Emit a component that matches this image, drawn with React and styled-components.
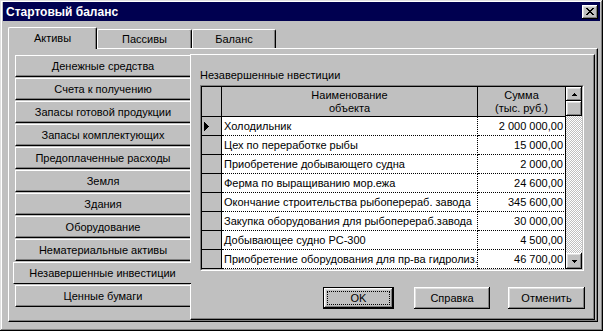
import React from 'react';
import styled, { createGlobalStyle } from 'styled-components';

const GlobalStyle = createGlobalStyle`
  html, body { margin: 0; padding: 0; background: #c0c0c0; }
  body { font-family: "Liberation Sans", Arial, sans-serif; font-size: 11px; color: #000; }
  * { box-sizing: border-box; }
`;

const bevelOut = `
  box-shadow: inset -1px -1px #000, inset 1px 1px #fff, inset -2px -2px #808080, inset 2px 2px #dfdfdf;
`;

const Window = styled.div`
  width: 603px;
  height: 331px;
  background: #c0c0c0;
  padding: 2px 3px 3px 3px;
  display: flex;
  flex-direction: column;
  box-shadow: inset -1px -1px #000, inset 1px 1px #dfdfdf, inset -2px -2px #808080, inset 2px 2px #fff;
`;

const TitleBar = styled.div`
  height: 19px;
  background: #000050;
  display: flex;
  align-items: center;
  justify-content: space-between;
  padding: 0 2px 0 3px;
`;

const Title = styled.span`
  color: #fff;
  font-weight: bold;
  font-size: 12px;
`;

const CloseButton = styled.div`
  width: 16px;
  height: 14px;
  background: #c0c0c0;
  display: flex;
  align-items: center;
  justify-content: center;
  padding-bottom: 1px;
  ${bevelOut}
`;

const TabStrip = styled.div`
  height: 27px;
  display: flex;
  align-items: flex-end;
  padding-left: 5px;
`;

const Tab = styled.div`
  width: ${(p) => p.$w}px;
  height: ${(p) => (p.$active ? 22 : 19)}px;
  margin-bottom: ${(p) => (p.$active ? -1 : 0)}px;
  position: relative;
  z-index: ${(p) => (p.$active ? 2 : 1)};
  background: #c0c0c0;
  border-top: 1px solid #fff;
  border-left: 1px solid #fff;
  border-right: 1px solid #000;
  border-radius: 2px 2px 0 0;
  box-shadow: inset -1px 0 #808080;
  display: flex;
  align-items: center;
  justify-content: center;
  padding-bottom: ${(p) => (p.$active ? 1 : 0)}px;
  font-size: 11px;
`;

const TabPanel = styled.div`
  flex: 1;
  margin: 0 2px 6px 5px;
  border-top: 1px solid #fff;
  border-left: 1px solid #fff;
  border-right: 1px solid #000;
  border-bottom: 1px solid #000;
  box-shadow: inset -1px -1px #808080;
  padding: 5px 2px 1px 6px;
  display: flex;
`;

const SideTabs = styled.div`
  width: 175px;
  flex: none;
  display: flex;
  flex-direction: column;
  gap: 1px;
  padding-top: 1px;
`;

const SideTab = styled.div`
  height: 22px;
  background: #c0c0c0;
  border-top: 1px solid #fff;
  border-left: 1px solid #fff;
  border-bottom: 1px solid #000;
  box-shadow: ${(p) => (p.$active ? 'none' : 'inset 0 -1px #808080')};
  display: flex;
  align-items: center;
  justify-content: center;
  white-space: nowrap;
  margin-left: ${(p) => (p.$active ? -2 : 0)}px;
  margin-right: ${(p) => (p.$active ? -1 : 0)}px;
  position: relative;
  z-index: ${(p) => (p.$active ? 2 : 0)};
  font-size: 11px;
`;

const ContentPanel = styled.div`
  flex: 1;
  border-top: 1px solid #fff;
  border-left: 1px solid #fff;
  border-right: 1px solid #000;
  border-bottom: 1px solid #000;
  box-shadow: inset -1px -1px #808080;
  padding: 13px 9px 0 9px;
  display: flex;
  flex-direction: column;
`;

const SectionLabel = styled.div`
  height: 14px;
  line-height: 14px;
  margin-bottom: 3px;
  font-size: 11px;
`;

const Grid = styled.div`
  width: 384px;
  height: 186px;
  border: 1px solid;
  border-color: #808080 #fff #fff #808080;
`;

const GridBody = styled.div`
  height: 100%;
  border: 1px solid;
  border-color: #000 #c0c0c0 #c0c0c0 #000;
  display: flex;
`;

const Table = styled.div`
  display: grid;
  grid-template-columns: 20px 256px 88px;
  grid-template-rows: 30px repeat(8, 19px);
`;

const HeadCell = styled.div`
  background: #c0c0c0;
  border-right: 1px solid #000;
  border-bottom: 1px solid #000;
  display: flex;
  flex-direction: column;
  align-items: center;
  justify-content: center;
  line-height: 13px;
  font-size: 11px;
  text-align: center;
`;

const RowHead = styled.div`
  background: #c0c0c0;
  border-right: 1px solid #000;
  border-bottom: 1px solid #000;
  display: flex;
  align-items: center;
  padding-left: 2px;
`;

const Cell = styled.div`
  background: #fff;
  border-bottom: 1px dotted #000;
  border-right: 1px ${(p) => (p.$num ? 'solid' : 'dotted')} #000;
  text-align: ${(p) => (p.$num ? 'right' : 'left')};
  padding: ${(p) => (p.$num ? '0 2px 0 0' : '0 0 0 2px')};
  line-height: 18px;
  white-space: nowrap;
  overflow: hidden;
  font-size: 11px;
`;

const ScrollBar = styled.div`
  width: 16px;
  display: flex;
  flex-direction: column;
`;

const ScrollBtn = styled.div`
  height: ${(p) => p.$h}px;
  background: #c0c0c0;
  display: flex;
  align-items: center;
  justify-content: center;
  ${bevelOut}
`;

const ScrollTrack = styled.div`
  flex: 1;
  background: repeating-conic-gradient(#c0c0c0 0 25%, #fff 0 50%) 0 0 / 2px 2px;
`;

const ButtonRow = styled.div`
  display: flex;
  justify-content: flex-end;
  margin-top: 16px;
`;

const PushButton = styled.div`
  width: ${(p) => p.$w}px;
  height: 22px;
  margin-left: ${(p) => p.$gap || 0}px;
  background: #c0c0c0;
  display: flex;
  align-items: center;
  justify-content: center;
  font-size: 11px;
  border: ${(p) => (p.$default ? '1px solid #000' : 'none')};
  ${bevelOut}
  padding: 3px;
`;

const FocusRect = styled.div`
  width: 100%;
  height: 100%;
  border: 1px dotted #000;
  display: flex;
  align-items: center;
  justify-content: center;
`;

const sideItems = [
  'Денежные средства',
  'Счета к получению',
  'Запасы готовой продукции',
  'Запасы комплектующих',
  'Предоплаченные расходы',
  'Земля',
  'Здания',
  'Оборудование',
  'Нематериальные активы',
  'Незавершенные инвестиции',
  'Ценные бумаги',
];

const rows = [
  ['Холодильник', '2 000 000,00'],
  ['Цех по переработке рыбы', '15 000,00'],
  ['Приобретение добывающего судна', '2 000,00'],
  ['Ферма по выращиванию мор.ежа', '24 600,00'],
  ['Окончание строительства рыбоперераб. завода', '345 600,00'],
  ['Закупка оборудования для рыбоперераб.завода', '30 000,00'],
  ['Добывающее судно РС-300', '4 500,00'],
  ['Приобретение оборудования для пр-ва гидролиз.', '46 700,00'],
];

const CloseIcon = () => (
  <svg width="8" height="7" viewBox="0 0 8 7" shapeRendering="crispEdges">
    <path d="M0 0h2v1h1v1h2v-1h1v-1h2v1h-1v1h-1v1h-1v1h1v1h1v1h1v1h-2v-1h-1v-1h-2v1h-1v1h-2v-1h1v-1h1v-1h1v-1h-1v-1h-1v-1h-1z" fill="#000" />
  </svg>
);

const Arrow = ({ down }) => (
  <svg width="5" height="3" viewBox="0 0 5 3" shapeRendering="crispEdges">
    <path d={down ? 'M0 0h5v1h-1v1h-1v1h-1v-1h-1v-1h-1z' : 'M2 0h1v1h1v1h1v1h-5v-1h1v-1h1z'} fill="#000" />
  </svg>
);

const RowMarker = () => (
  <svg width="5" height="9" viewBox="0 0 5 9" shapeRendering="crispEdges">
    <path d="M0 0h1v1h1v1h1v1h1v1h1v1h-1v1h-1v1h-1v1h-1v1h-1z" fill="#000" />
  </svg>
);

export default function App() {
  return (
    <>
      <GlobalStyle />
      <Window>
        <TitleBar>
          <Title>Стартовый баланс</Title>
          <CloseButton>
            <CloseIcon />
          </CloseButton>
        </TitleBar>
        <TabStrip>
          <Tab $active $w={89}>Активы</Tab>
          <Tab $w={95}>Пассивы</Tab>
          <Tab $w={84}>Баланс</Tab>
        </TabStrip>
        <TabPanel>
          <SideTabs>
            {sideItems.map((s) => (
              <SideTab key={s} $active={s === 'Незавершенные инвестиции'}>
                {s}
              </SideTab>
            ))}
          </SideTabs>
          <ContentPanel>
            <SectionLabel>Незавершенные нвестиции</SectionLabel>
            <Grid>
              <GridBody>
                <Table>
                  <HeadCell />
                  <HeadCell>
                    <span>Наименование</span>
                    <span>объекта</span>
                  </HeadCell>
                  <HeadCell>
                    <span>Сумма</span>
                    <span>(тыс. руб.)</span>
                  </HeadCell>
                  {rows.map(([name, sum], i) => (
                    <React.Fragment key={name}>
                      <RowHead>{i === 0 && <RowMarker />}</RowHead>
                      <Cell>{name}</Cell>
                      <Cell $num>{sum}</Cell>
                    </React.Fragment>
                  ))}
                </Table>
                <ScrollBar>
                  <ScrollBtn $h={14}>
                    <Arrow />
                  </ScrollBtn>
                  <ScrollBtn $h={15} />
                  <ScrollTrack />
                  <ScrollBtn $h={16}>
                    <Arrow down />
                  </ScrollBtn>
                </ScrollBar>
              </GridBody>
            </Grid>
            <ButtonRow>
              <PushButton $default $w={71}>
                <FocusRect>OK</FocusRect>
              </PushButton>
              <PushButton $w={76} $gap={20}>Справка</PushButton>
              <PushButton $w={77} $gap={18}>Отменить</PushButton>
            </ButtonRow>
          </ContentPanel>
        </TabPanel>
      </Window>
    </>
  );
}
